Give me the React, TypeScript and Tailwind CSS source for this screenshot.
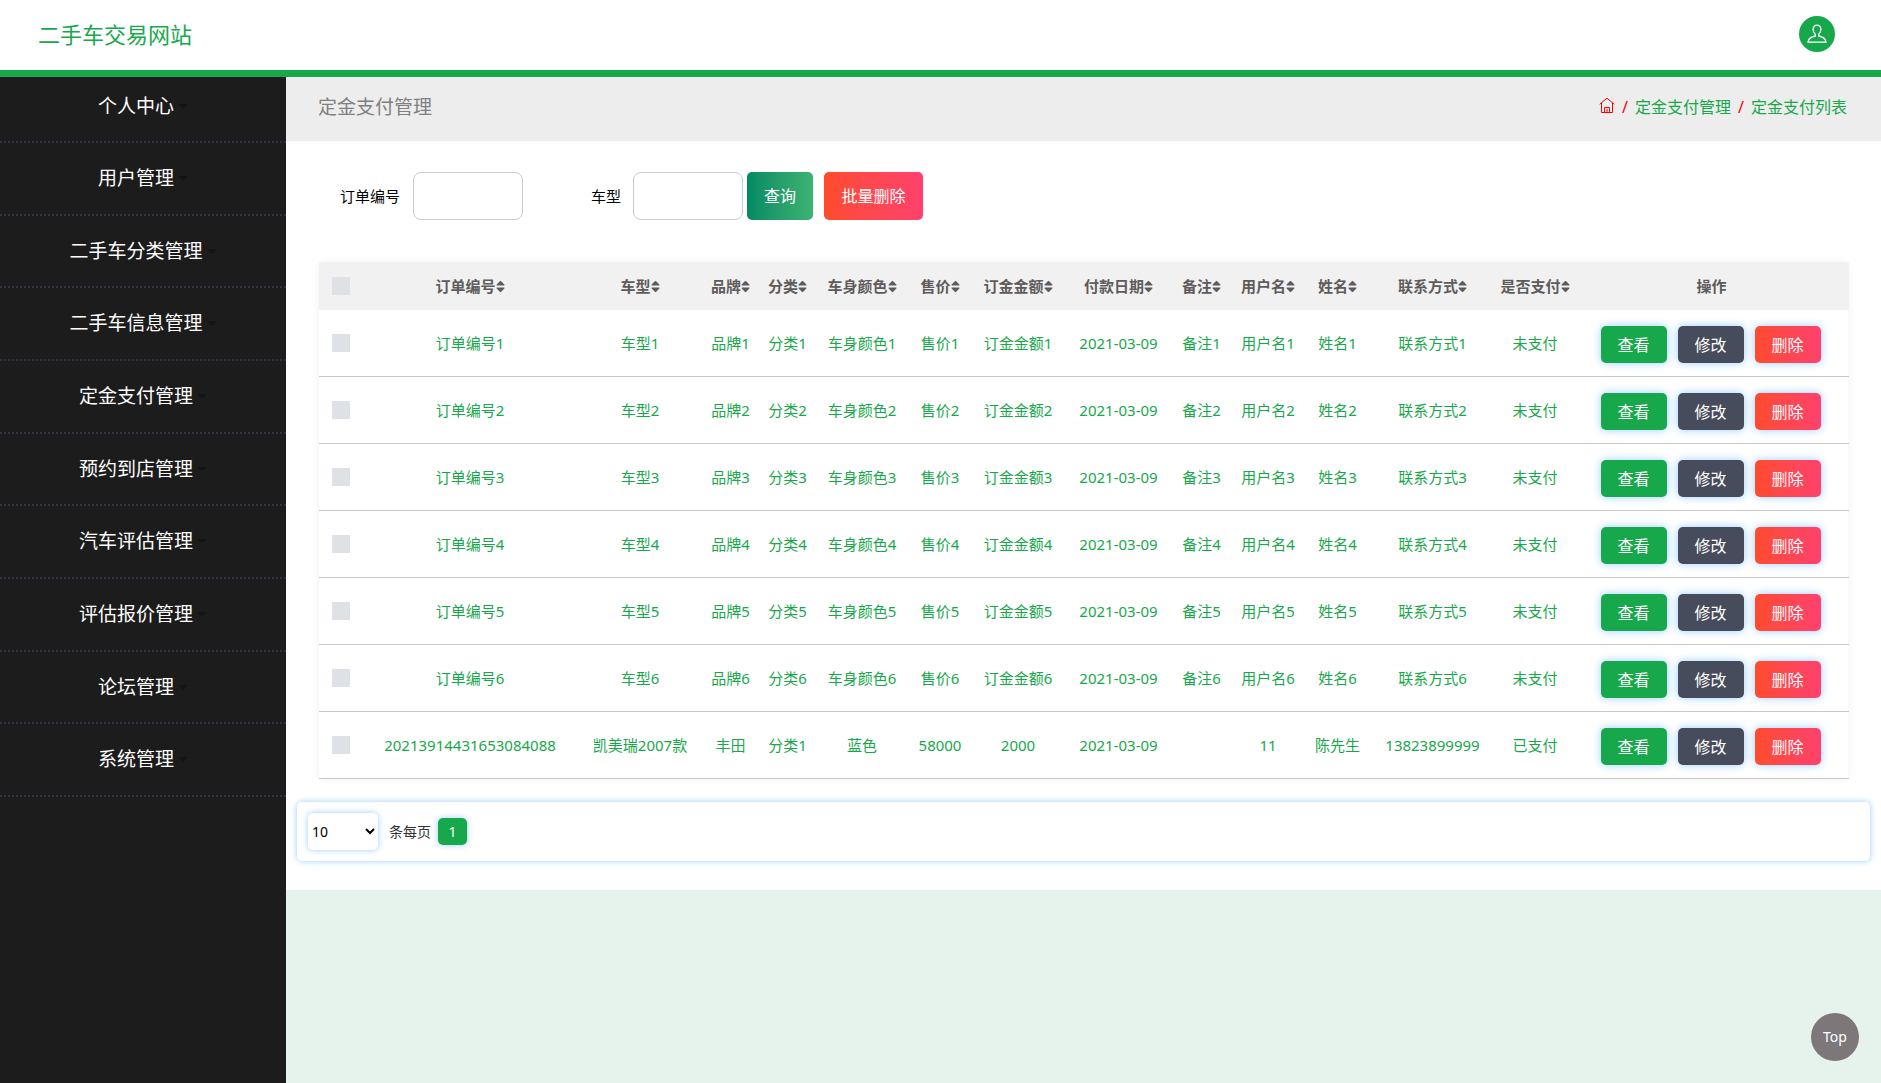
import React from 'react';
import { FaSort } from 'react-icons/fa';

const menus = [
  '个人中心',
  '用户管理',
  '二手车分类管理',
  '二手车信息管理',
  '定金支付管理',
  '预约到店管理',
  '汽车评估管理',
  '评估报价管理',
  '论坛管理',
  '系统管理',
];

const columns = [
  { title: '订单编号', width: 'w-[216px]' },
  { title: '车型', width: 'w-[124px]' },
  { title: '品牌', width: 'w-[57px]' },
  { title: '分类', width: 'w-[57px]' },
  { title: '车身颜色', width: 'w-[92px]' },
  { title: '售价', width: 'w-[64px]' },
  { title: '订金金额', width: 'w-[92px]' },
  { title: '付款日期', width: 'w-[109px]' },
  { title: '备注', width: 'w-[57px]' },
  { title: '用户名', width: 'w-[76px]' },
  { title: '姓名', width: 'w-[63px]' },
  { title: '联系方式', width: 'w-[127px]' },
  { title: '是否支付', width: 'w-[78px]' },
];

const rows = [
  ...[1, 2, 3, 4, 5, 6].map((n) => [
    `订单编号${n}`,
    `车型${n}`,
    `品牌${n}`,
    `分类${n}`,
    `车身颜色${n}`,
    `售价${n}`,
    `订金金额${n}`,
    '2021-03-09',
    `备注${n}`,
    `用户名${n}`,
    `姓名${n}`,
    `联系方式${n}`,
    '未支付',
  ]),
  [
    '20213914431653084088',
    '凯美瑞2007款',
    '丰田',
    '分类1',
    '蓝色',
    '58000',
    '2000',
    '2021-03-09',
    '',
    '11',
    '陈先生',
    '13823899999',
    '已支付',
  ],
];

function UserIcon() {
  return (
    <svg viewBox="0 0 20 20" className="h-5 w-5" fill="none" stroke="currentColor" strokeWidth="1.3">
      <path d="M10 1.2c-2.500 0-3.900 1.700-3.900 4.100 0 2.200 1 4 2.200 5v1.700c-3.200.6-6.700 2.100-7.300 6.200h18c-.6-4.100-4.100-5.600-7.300-6.200v-1.700c1.200-1 2.200-2.800 2.200-5 0-2.400-1.400-4.100-3.900-4.100z" />
    </svg>
  );
}

function HomeIcon() {
  return (
    <svg viewBox="0 0 16 16" className="h-4 w-4" fill="none" stroke="currentColor" strokeWidth="1">
      <path d="M.7 7.300 8 1.200l7.300 6.100M2.500 6v9.500h11V6M5.500 15.500v-5h5v5M8 12v3.500" />
    </svg>
  );
}

function Checkbox({ label }: { label: string }) {
  return (
    <input
      type="checkbox"
      aria-label={label}
      className="ml-[13px] block h-[18px] w-[18px] appearance-none bg-[#dee2e6] checked:bg-[#17a84b]"
    />
  );
}

const actionClass = 'h-[37px] w-[66px] rounded-[5px] text-base text-white shadow-[0_0_8px_#99ccff]';

export default function App() {
  return (
    <div className="flex min-h-screen flex-col bg-[#e6f3ec] font-['Noto_Sans','Noto_Sans_CJK_SC',sans-serif] text-[15px]">
      <header className="flex h-[77px] items-center justify-between border-b-[7px] border-[#17a84b] bg-white pr-[46px] pb-0.5 pl-[38px]">
        <a href="#" className="text-[22px] text-[#17a84b]">
          二手车交易网站
        </a>
        <button
          type="button"
          aria-label="个人中心"
          className="flex h-9 w-9 items-center justify-center rounded-full bg-[#17a84b] text-white"
        >
          <UserIcon />
        </button>
      </header>

      <div className="flex flex-1">
        <nav className="w-[286px] shrink-0 bg-[#1c1c1c]">
          <ul>
            {menus.map((name) => (
              <li
                key={name}
                className="h-[73px] border-b-2 border-dotted border-[#2f3542] first:h-[66px] first:pb-1.5 nth-[3n]:h-[72px]"
              >
                <a href="#" className="flex h-full items-center justify-center gap-1 text-[19px] text-white">
                  {name}
                  <span className="border-x-[5px] border-t-[5px] border-x-transparent border-t-[#141414]" />
                </a>
              </li>
            ))}
          </ul>
        </nav>

        <main className="min-w-0 flex-1">
          <div className="flex h-16 items-center justify-between bg-[#ededed] pr-[34px] pb-1 pl-8">
            <h1 className="text-[19px] text-[#808080]">定金支付管理</h1>
            <div className="flex items-center gap-[7px] text-base text-[#17a84b]">
              <a href="#" aria-label="首页" className="pb-1 text-[#f00]">
                <HomeIcon />
              </a>
              <span className="text-[#f00]">/</span>
              <a href="#">定金支付管理</a>
              <span className="text-[#f00]">/</span>
              <span>定金支付列表</span>
            </div>
          </div>

          <div className="bg-white pb-[29px]">
            <form className="flex items-center pt-[31px] pl-[54px]">
              <label htmlFor="orderNo">订单编号</label>
              <input id="orderNo" className="mr-[68px] ml-[13px] h-12 w-[110px] rounded-lg border border-[#ccc] px-3" />
              <label htmlFor="model">车型</label>
              <input id="model" className="mr-1 ml-3 h-12 w-[110px] rounded-lg border border-[#ccc] px-3" />
              <button
                type="button"
                className="mr-[11px] h-12 w-[66px] rounded-[5px] bg-linear-to-r from-[#008a64] to-[#3cb371] text-base text-white"
              >
                查询
              </button>
              <button
                type="button"
                className="h-12 w-[99px] rounded-[5px] bg-linear-to-r from-[#ff4b2b] to-[#ff416c] text-base text-white"
              >
                批量删除
              </button>
            </form>

            <div className="mt-[42px] mr-[33px] ml-[33px] shadow-[0_0_8px_rgba(0,0,0,0.06)]">
              <table className="w-full table-fixed border-separate border-spacing-0 text-center whitespace-nowrap">
                <thead className="bg-[#f1f1f1] text-[#5f5b5b]">
                  <tr className="h-12">
                    <th className="w-[43px]">
                      <Checkbox label="全选" />
                    </th>
                    {columns.map((col) => (
                      <th key={col.title} className={`${col.width} font-bold`}>
                        <span className="inline-flex items-center">
                          {col.title}
                          <FaSort className="h-[15px] w-[9px]" />
                        </span>
                      </th>
                    ))}
                    <th className="w-[275px] font-bold">操作</th>
                  </tr>
                </thead>
                <tbody className="text-[#17a84b]">
                  {rows.map((row) => (
                    <tr key={row[0]} className="h-[67px] [&>td]:border-b [&>td]:border-[#c8c8c8]">
                      <td>
                        <Checkbox label={row[0]} />
                      </td>
                      {row.map((cell, i) => (
                        <td key={i}>{cell}</td>
                      ))}
                      <td>
                        <div className="flex justify-center gap-[11px] pt-[3px] pr-0.5">
                          <button type="button" className={`${actionClass} bg-[#17a84b]`}>
                            查看
                          </button>
                          <button type="button" className={`${actionClass} bg-[#464c5b]`}>
                            修改
                          </button>
                          <button type="button" className={`${actionClass} bg-linear-to-r from-[#ff4b2b] to-[#ff416c]`}>
                            删除
                          </button>
                        </div>
                      </td>
                    </tr>
                  ))}
                </tbody>
              </table>
            </div>

            <div className="mt-[23px] mr-[11px] ml-[11px] flex h-[59px] items-center rounded-[5px] px-[11px] text-sm text-[#333] shadow-[0_0_6px_#99ccff]">
              <select
                id="pageSize"
                defaultValue="10"
                className="h-[37px] w-[70px] rounded-[5px] bg-white text-black shadow-[0_0_6px_#99ccff]"
              >
                <option>10</option>
                <option>25</option>
                <option>50</option>
              </select>
              <label htmlFor="pageSize" className="mr-[7px] ml-[11px]">
                条每页
              </label>
              <button
                type="button"
                className="h-[27px] w-[29px] rounded-[5px] bg-[#17a84b] text-white shadow-[0_0_6px_#99ccff]"
              >
                1
              </button>
            </div>
          </div>
        </main>
      </div>

      <button
        type="button"
        className="fixed right-[22px] bottom-[22px] h-12 w-12 rounded-full bg-[#7d777a] text-sm text-white"
      >
        Top
      </button>
    </div>
  );
}
